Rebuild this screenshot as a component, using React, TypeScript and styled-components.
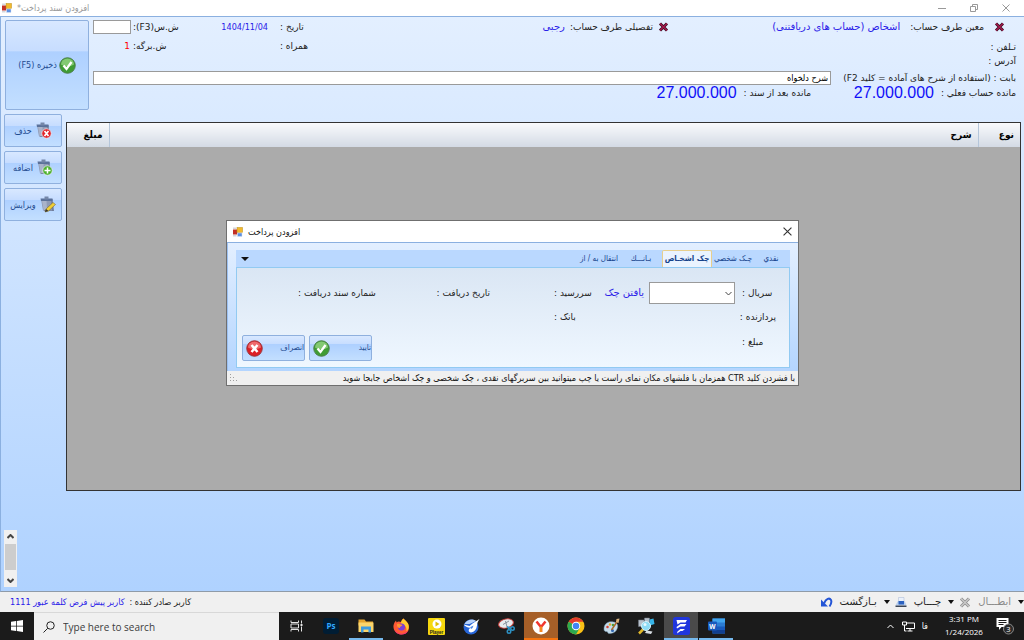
import React from "react";
import styled, { createGlobalStyle, css } from "styled-components";

const narrow = `"DejaVu Sans Condensed", "DejaVu Sans", sans-serif`;
const wide = `"DejaVu Sans", sans-serif`;

const GlobalStyle = createGlobalStyle`
  *, *::before, *::after { box-sizing: border-box; }
  html, body { margin: 0; padding: 0; }
  body {
    font-family: ${narrow};
    font-size: 9px;
    line-height: 14px;
    color: #222;
    background: #fff;
  }
  button, input, select { font: inherit; color: inherit; margin: 0; }
  button { cursor: pointer; }
  svg { display: block; flex: none; }
`;

const Window = styled.div`
  display: flex;
  flex-direction: column;
  min-height: 100vh;
  white-space: nowrap;
`;

const TitleBar = styled.header`
  display: flex;
  align-items: center;
  gap: 5px;
  height: 16px;
  padding: 0 14px 0 2px;
  color: #999;
  background: #fff;
`;

const TitleText = styled.h1`
  flex: 1;
  margin: 0;
  font-size: 9px;
  font-weight: normal;
  text-align: left;
`;

const WindowControls = styled.div`
  display: flex;
  gap: 24px;
`;

const IconButton = styled.button`
  display: flex;
  align-items: center;
  justify-content: center;
  padding: 0;
  border: 0;
  background: none;
`;

const Workspace = styled.main`
  position: relative;
  flex: 1;
  display: flex;
  flex-direction: column;
  border-top: 1px solid #8bb0e0;
  border-left: 1px solid #8bb0e0;
  border-bottom: 1px solid #8f9ba8;
  background: linear-gradient(#e3efff, #afd2ff);
`;

const FormHeader = styled.section`
  display: flex;
  gap: 4px;
  height: 97px;
  padding: 3px 8px 0 4px;
`;

const glossy = css`
  border: 1px solid #8fb0de;
  border-radius: 2px;
  color: #1f4b8f;
  background: linear-gradient(#d8e8ff 0%, #c7ddff 34%, #aed0ff 35%, #c3dfff 100%);
`;

const SaveButton = styled.button`
  ${glossy}
  display: flex;
  align-items: center;
  justify-content: center;
  gap: 2px;
  width: 84px;
  height: 90px;
  padding: 0;
`;

const AccountForm = styled.form`
  flex: 1;
  display: flex;
  flex-direction: column;
  direction: rtl;
  font-family: ${wide};
`;

const AccountGrid = styled.div`
  display: grid;
  grid-template-columns: minmax(0, 347fr) minmax(0, 361fr) 215px;
  height: 51px;
`;

const Party = styled.div<{ $inset: number; $gap: number }>`
  display: flex;
  align-items: center;
  gap: ${(p) => p.$gap}px;
  height: 14px;
  padding-right: ${(p) => p.$inset}px;
`;

const BlueLink = styled.a`
  font-family: ${wide};
  font-size: 10px;
  color: #2a20e8;
  text-decoration: none;
`;

const ContactLines = styled.div`
  padding-top: 6px;
`;

const MetaGrid = styled.div`
  display: grid;
  grid-template-columns: 28px 98px 49px 40px;
  grid-auto-rows: 14px;
  row-gap: 5px;
`;

const EndLabel = styled.label<{ $col?: number }>`
  grid-column: ${(p) => p.$col ?? "auto"};
  text-align: left;
`;

const DateValue = styled.span`
  padding-right: 12px;
  font-family: ${narrow};
  color: #2a20e8;
`;

const SheetNumber = styled.span`
  grid-column: 4;
  padding-right: 3px;
  color: #f00;
`;

const TextBox = styled.input`
  height: 14px;
  min-width: 0;
  padding: 0 2px;
  border: 1px solid #9a9a9a;
  border-radius: 0;
  font-family: ${narrow};
  color: #000;
  background: #fff;
`;

const SerialBox = styled(TextBox)`
  width: 38px;
  justify-self: end;
`;

const SubjectRow = styled.div`
  display: flex;
  align-items: center;
  gap: 6px;
  & > label { min-width: 179px; }
  & > input { flex: 1; }
`;

const BalanceRow = styled.div`
  display: flex;
  align-items: center;
  height: 15px;
`;

const Balance = styled.div`
  display: flex;
  align-items: center;
  gap: 7px;
  width: 205px;
`;

const Amount = styled.output`
  font-family: "Liberation Sans", sans-serif;
  font-size: 16px;
  color: #1010f8;
`;

const Body = styled.section`
  flex: 1;
  display: flex;
  gap: 4px;
  padding: 0 3px 0 3px;
`;

const SideTools = styled.nav`
  display: flex;
  flex-direction: column;
  gap: 4px;
  width: 58px;
`;

const SideButton = styled.button`
  ${glossy}
  display: flex;
  align-items: center;
  justify-content: center;
  gap: 4px;
  height: 33px;
  padding: 0;
  direction: rtl;
`;

const GridFrame = styled.div`
  flex: 1;
  margin-top: 8px;
  border: 1px solid #333;
  background: #ababab;
`;

const GridTable = styled.table`
  width: 100%;
  border-collapse: collapse;
  table-layout: fixed;
  direction: rtl;
`;

const HeadCell = styled.th<{ $width?: number }>`
  width: ${(p) => (p.$width ? `${p.$width}px` : "auto")};
  height: 24px;
  padding: 0 6px;
  border-left: 1px solid #b5c6da;
  font-size: 10px;
  text-align: right;
  color: #000;
  background: linear-gradient(#f9fafc, #d3dae4);
  &:last-child { border-left: 0; }
`;

const LowerStrip = styled.section`
  padding: 39px 3px 4px;
`;

const ScrollBar = styled.div`
  display: flex;
  flex-direction: column;
  justify-content: space-between;
  align-items: center;
  width: 13px;
  height: 57px;
  background: #f0f0f0;
`;

const ScrollButton = styled(IconButton)`
  width: 13px;
  height: 13px;
`;

const ScrollThumb = styled.div`
  width: 11px;
  height: 26px;
  margin-bottom: 4px;
  background: #cdcdcd;
`;

const Overlay = styled.div`
  position: absolute;
  inset: 0;
  display: grid;
  place-items: center;
  padding-bottom: 2px;
`;

const Dialog = styled.section`
  display: flex;
  flex-direction: column;
  width: 573px;
  border: 1px solid #6f6f6f;
  background: #fff;
`;

const DialogTitle = styled.header`
  display: flex;
  align-items: center;
  gap: 5px;
  height: 22px;
  padding: 0 6px;
  border-bottom: 1px solid #8bb0e0;
  color: #111;
`;

const DialogBody = styled.div`
  padding: 7px 8px 3px;
  border-left: 1px solid #9cc0f0;
  background: linear-gradient(#e3efff, #b4d5ff);
`;

const TabStrip = styled.div`
  display: flex;
  align-items: flex-end;
  height: 17px;
  padding-right: 2px;
  direction: rtl;
  background: #bad8ff;
`;

const Tab = styled.button<{ $active?: boolean; $width: number }>`
  width: ${(p) => p.$width}px;
  height: 17px;
  padding: 0;
  overflow: hidden;
  border: 1px solid ${(p) => (p.$active ? "#e8cf8c" : "transparent")};
  border-bottom: 0;
  border-radius: 2px 2px 0 0;
  font-size: 8px;
  font-weight: ${(p) => (p.$active ? "bold" : "normal")};
  line-height: 12px;
  color: #15428b;
  background: ${(p) => (p.$active ? "#eaf3ff" : "none")};
`;

const TabMenu = styled(IconButton)`
  width: 18px;
  height: 17px;
  margin-right: auto;
`;

const TabPanel = styled.form`
  display: grid;
  grid-template-columns: 34px 145px 43px 64px 53px 58px 81px 1fr;
  grid-template-rows: 22px 26px 24px 7px;
  align-items: center;
  height: 101px;
  padding: 14px 13px 0 5px;
  border: 1px solid #92caf2;
  direction: rtl;
  font-family: ${wide};
  background: linear-gradient(#dae6f4, #eff7ff);
`;

const SerialCell = styled.div`
  display: flex;
  align-items: center;
  gap: 5px;
  padding-right: 7px;
`;

const SelectBox = styled.span`
  display: grid;
  width: 86px;
  height: 22px;
  direction: ltr;
  & > * { grid-area: 1 / 1; }
  & > svg { align-self: center; justify-self: end; margin-right: 3px; pointer-events: none; }
`;

const SerialSelect = styled.select`
  appearance: none;
  border: 1px solid #9a9a9a;
  border-radius: 0;
  background: #fff;
`;

const DialogActions = styled.div`
  grid-column: 2 / -1;
  grid-row: 3 / 5;
  align-self: end;
  justify-self: end;
  display: flex;
  gap: 4px;
`;

const ActionButton = styled.button`
  ${glossy}
  display: flex;
  align-items: center;
  justify-content: space-between;
  width: 63px;
  height: 26px;
  padding: 0 0 0 3px;
  font-family: ${narrow};
  font-size: 8px;
`;

const Hint = styled.footer`
  display: flex;
  align-items: center;
  justify-content: space-between;
  height: 14px;
  padding: 0 3px;
  direction: rtl;
  color: #111;
  background: #f0f0f0;
`;

const StatusBar = styled.footer`
  display: flex;
  align-items: center;
  justify-content: space-between;
  height: 20px;
  direction: rtl;
  background: #f0f0f0;
`;

const StatusTools = styled.div`
  display: flex;
  align-items: center;
  gap: 5px;
`;

const StatusButton = styled.button<{ $muted?: boolean }>`
  display: flex;
  align-items: center;
  gap: 7px;
  padding: 0;
  border: 0;
  background: none;
  font-family: ${wide};
  font-size: 10px;
  color: ${(p) => (p.$muted ? "#8a8a8a" : "#222")};
`;

const Issuer = styled.p`
  display: flex;
  gap: 5px;
  margin: 0;
  padding-left: 10px;
`;

const IssuerName = styled.span`
  color: #2a20e8;
`;

const Taskbar = styled.footer`
  display: flex;
  align-items: stretch;
  height: 28px;
  color: #fff;
  background: #1b1b1b;
`;

const StartButton = styled(IconButton)`
  width: 34px;
`;

const SearchBox = styled.label`
  display: flex;
  align-items: center;
  gap: 8px;
  width: 245px;
  padding-left: 9px;
  border-top: 1px solid #d8d8d8;
  background: #f0f0f0;
`;

const SearchInput = styled.input`
  flex: 1;
  min-width: 0;
  padding: 0;
  border: 0;
  outline: 0;
  font-family: "Open Sans", sans-serif;
  font-size: 10px;
  background: none;
  &::placeholder { color: #3c3c3c; opacity: 1; }
`;

const TaskList = styled.nav`
  flex: 1;
  display: flex;
  gap: 1px;
`;

const TaskButton = styled.button<{ $tone?: string; $line?: string }>`
  display: flex;
  align-items: center;
  justify-content: center;
  width: 34px;
  padding: 2px 0 0;
  border: 0;
  border-bottom: 2px solid ${(p) => p.$line ?? "transparent"};
  background: ${(p) => p.$tone ?? "none"};
`;

const Tray = styled.div`
  display: flex;
  align-items: center;
  gap: 7px;
  padding-right: 10px;
`;

const Clock = styled.time`
  width: 42px;
  margin: 0 4px 0 8px;
  padding-bottom: 2px;
  font-family: "Open Sans", sans-serif;
  font-size: 8px;
  line-height: 13px;
  text-align: center;
`;

const FormIcon = () => (
  <svg width="10" height="10" viewBox="0 0 20 20">
    <rect x="0" y="5" width="9" height="10" fill="#c22f25" />
    <rect x="8" y="1" width="11" height="10" fill="#f2b92c" stroke="#b98a14" />
    <rect x="9" y="12" width="9" height="7" fill="#5b8fe0" stroke="#d9e4f5" />
    <path d="M0 1h7v3H0ZM0 16h7v3H0Z" fill="#d3d6dc" />
  </svg>
);

const CloseGlyph = ({ size = 8, color = "#999" }) => (
  <svg width={size} height={size} viewBox="0 0 8 8" stroke={color} fill="none">
    <path d="M0.5 0.5 7.5 7.5M7.5 0.5 0.5 7.5" />
  </svg>
);

const RedCross = () => (
  <svg width="11" height="10" viewBox="0 0 22 20">
    <path d="M4 3 18 17M18 3 4 17" stroke="#3b1022" strokeWidth="6" />
    <path d="M4 3 18 17M18 3 4 17" stroke="#a8184e" strokeWidth="2.5" />
  </svg>
);

const CheckBall = ({ size = 17 }) => (
  <svg width={size} height={size} viewBox="0 0 34 34">
    <circle cx="17" cy="17" r="15.5" fill="#3f9c34" stroke="#4c7f4a" strokeWidth="2" />
    <path d="M4 15a13 12 0 0 1 26 0c-8 5-18 5-26 0Z" fill="#83c972" />
    <path d="m9 17 6 7L25 10" fill="none" stroke="#fff" strokeWidth="4.5" />
  </svg>
);

const CrossBall = ({ size = 17 }) => (
  <svg width={size} height={size} viewBox="0 0 34 34">
    <circle cx="17" cy="17" r="15.5" fill="#dc1f26" stroke="#9b3438" strokeWidth="2" />
    <path d="M4 15a13 12 0 0 1 26 0c-8 4-18 4-26 0Z" fill="#ef6a6d" />
    <path d="m11 10 12 14M23 10 11 24" fill="none" stroke="#fff" strokeWidth="5" />
  </svg>
);

const Clipboard = ({ badge }: { badge: "remove" | "add" | "edit" }) => (
  <svg width="16" height="17" viewBox="0 0 32 34">
    <path d="M3 6h22l3 24H8Z" fill="#6f7d9c" />
    <path d="M2 6h20l2 23H6Z" fill="#8e9ab5" />
    <path d="M4 9h9l1 19H7Z" fill="#a9b3ca" />
    <path d="M1 5h24v5H2Z" fill="#5b7199" />
    <path d="M9 1h8v6H9Z" fill="#7587a8" />
    {badge === "edit" ? (
      <g>
        <path d="m12 26 14-13 5 4-14 13-7 2Z" fill="#f0cf36" stroke="#6b5a25" />
        <path d="m12 26 5 4-7 2Z" fill="#333" />
      </g>
    ) : (
      <g>
        <circle cx="21" cy="23" r="9.5" fill={badge === "add" ? "#4fb22f" : "#e2252b"} stroke="#e9eef6" strokeWidth="1.5" />
        {badge === "add" ? (
          <path d="M21 17v12M15 23h12" stroke="#fff" strokeWidth="3" />
        ) : (
          <path d="m17 18 8 10M25 18l-8 10" stroke="#fff" strokeWidth="3.5" />
        )}
      </g>
    )}
  </svg>
);

const Caret = ({ width = 6 }) => (
  <svg width={width} height="4" viewBox="0 0 6 4" preserveAspectRatio="none">
    <path d="M0 0h6L3 4Z" fill="#111" />
  </svg>
);

const Chevron = ({ up = false, color = "#444", width = 7, weight = 1 }) => (
  <svg width={width} height="5" viewBox="0 0 7 5" fill="none" stroke={color} strokeWidth={weight}>
    <path d={up ? "M0.500 4 3.500 1l3 3" : "m0.500 1 3 3 3-3"} />
  </svg>
);

const GrayCross = () => (
  <svg width="12" height="11" viewBox="0 0 24 22">
    <path d="M4 3 20 19M20 3 4 19" stroke="#8c8c8c" strokeWidth="6" />
    <path d="M4 3 20 19M20 3 4 19" stroke="#c9c9c9" strokeWidth="3" />
  </svg>
);

const Printer = () => (
  <svg width="12" height="11" viewBox="0 0 24 22">
    <path d="M7 1h11v9H7Z" fill="#eaf1fb" stroke="#a4b7d4" />
    <path d="M5 9h15l3 8H1Z" fill="#b9cfee" />
    <path d="M7 8h11v7H7Z" fill="#2c62c0" />
    <path d="M1 17h22v3H1Z" fill="#3c4656" />
  </svg>
);

const Undo = () => (
  <svg width="13" height="11" viewBox="0 0 26 22">
    <path d="M2 5v14h14Z" fill="#2455d6" />
    <path d="M8 13C12 3 19 1 22 6c2 5 0 9-3 13" fill="none" stroke="#2455d6" strokeWidth="4" />
  </svg>
);

const Grip = () => (
  <svg width="8" height="8" viewBox="0 0 8 8" fill="#a0a0a0">
    <path d="M0 0h1v1H0zM0 3h1v1H0zM3 3h1v1H3zM0 6h1v1H0zM3 6h1v1H3zM6 6h1v1H6z" />
  </svg>
);

const WindowsLogo = () => (
  <svg width="12" height="12" viewBox="0 0 24 24" fill="#fff">
    <path d="M0 3.500 10 2v9.500H0ZM11.500 1.800 24 0v11.500H11.500ZM0 12.800h10V22L0 20.500ZM11.500 12.800H24V24l-12.500-1.800Z" />
  </svg>
);

const Magnifier = () => (
  <svg width="12" height="12" viewBox="0 0 24 24" fill="none" stroke="#222" strokeWidth="2">
    <circle cx="15" cy="9" r="7.500" />
    <path d="M9.500 14.500 1 23" />
  </svg>
);

const TaskView = () => (
  <svg width="13" height="12" viewBox="0 0 26 24" fill="none" stroke="#e4e4e4" strokeWidth="2">
    <path d="M2 1v4h15V1M2 23v-4h15v4M2 8h15v8H2ZM23 1v6M23 13v10" />
    <path d="M21 10h4" strokeWidth="4" />
  </svg>
);

const Photoshop = () => (
  <svg width="16" height="16" viewBox="0 0 32 32">
    <rect width="32" height="32" rx="6" fill="#001d34" />
    <text x="16" y="22" textAnchor="middle" fontFamily="Open Sans" fontWeight="bold" fontSize="16" fill="#31a8ff">Ps</text>
  </svg>
);

const Folder = () => (
  <svg width="16" height="14" viewBox="0 0 32 28">
    <path d="M1 1h12l3 4h14v8H1Z" fill="#e5a52e" />
    <path d="M1 7h30v19H1Z" fill="#fbd56b" />
    <path d="M6 15h20v12h-5v-6H11v6H6Z" fill="#3d9be0" />
  </svg>
);

const Firefox = () => (
  <svg width="17" height="17" viewBox="0 0 34 34">
    <path d="M21 1c3 4 6 5 9 10 6 12-2 22-13 22C6 33 0 24 1 15c1-4 2-7 5-10l1 4c3-3 6-2 9-1 1-3 2-5 5-7Z" fill="#ff5a36" />
    <path d="M21 1c3 4 6 5 9 10 3 7 1 12-3 16 1-8-2-13-11-16 0-4 2-8 5-10Z" fill="#ffcb2e" />
    <path d="M3 22c4 10 18 14 27 3-2 6-7 8-13 8C9 33 4 28 3 22Z" fill="#f5307c" />
    <circle cx="17" cy="18" r="7" fill="#7a3fd6" />
    <path d="M8 12c4-1 6 1 11 2-2 3-6 3-5 6-4 0-7-3-6-8Z" fill="#ff9530" />
  </svg>
);

const Player = () => (
  <svg width="17" height="17" viewBox="0 0 34 34">
    <rect width="34" height="34" rx="2" fill="#f6d80e" />
    <circle cx="18" cy="12" r="9" fill="#fff" />
    <path d="m15 7 8 5-8 5Z" fill="#e0bf00" />
    <text x="17" y="31" textAnchor="middle" fontFamily="Liberation Sans" fontWeight="bold" fontSize="9" fill="#222">Player</text>
  </svg>
);

const BlueBird = () => (
  <svg width="17" height="17" viewBox="0 0 34 34">
    <circle cx="16" cy="18" r="15" fill="#2866d8" />
    <path d="M3 12C7 3 20 0 26 6L13 12Z" fill="#b8d3fb" />
    <path d="m1 13 12 3 6-5 14-9c-3 5-5 8-5 13-1 8-5 13-12 14-5-1-6-5-3-8l5-2C10 20 5 18 1 13Z" fill="#fff" />
    <path d="m15 18 6-3-2 5-3 2Z" fill="#4a85e8" />
  </svg>
);

const Snipping = () => (
  <svg width="17" height="16" viewBox="0 0 34 32">
    <ellipse cx="16" cy="11" rx="15" ry="9" transform="rotate(-14 16 11)" fill="#e8ebef" stroke="#c9413d" strokeWidth="2" />
    <path d="m10 13 12-7M15 6l3 12" stroke="#88929e" strokeWidth="2" />
    <g fill="none" stroke="#2d91c4" strokeWidth="3">
      <circle cx="22" cy="27" r="3.500" />
      <circle cx="29" cy="21" r="3.500" />
      <path d="m22 23-3-6M26 20l-8-2" />
    </g>
  </svg>
);

const Yandex = () => (
  <svg width="18" height="18" viewBox="0 0 36 36">
    <circle cx="18" cy="18" r="17" fill="#fff" />
    <path d="m9 9 9 11 9-11M18 19v11" fill="none" stroke="#f0352d" strokeWidth="5" />
    <path d="M18 19v11" stroke="#f58a1e" strokeWidth="5" />
  </svg>
);

const Chrome = () => (
  <svg width="18" height="18" viewBox="0 0 36 36">
    <circle cx="18" cy="18" r="17" fill="#fbc116" />
    <path d="M18 18 3.300 9.500A17 17 0 0 1 32.700 9.500H18Z" fill="#e33b2e" />
    <path d="M3.300 9.500A17 17 0 0 0 18 35l7.400-13L18 18Z" fill="#2da94f" />
    <circle cx="18" cy="18" r="8.500" fill="#fff" />
    <circle cx="18" cy="18" r="6.500" fill="#4285f4" />
  </svg>
);

const Palette = () => (
  <svg width="17" height="17" viewBox="0 0 34 34">
    <path d="M2 22C2 10 12 6 21 8c8 1 10 8 7 14-3 7-9 9-16 9-3 0-2-4-5-4s-5-1-5-5Z" fill="#c5dcec" stroke="#7fa4bd" />
    <circle cx="9" cy="18" r="2.500" fill="#d54234" />
    <circle cx="14" cy="13" r="2.500" fill="#e5a82c" />
    <circle cx="20" cy="14" r="2.500" fill="#46a13c" />
    <circle cx="19" cy="25" r="3" fill="#2b67b8" />
    <path d="M17 24 29 6" stroke="#a9682c" strokeWidth="3" />
    <path d="m26 8 1-6 6-1-2 9Z" fill="#ddb681" />
  </svg>
);

const SearchTool = () => (
  <svg width="18" height="18" viewBox="0 0 36 36">
    <path d="M3 6h11v13H3ZM15 2h10v12H15Z" fill="#b7c0ca" stroke="#717b86" />
    <path d="m25 5 8-2 2 11-9 3Z" fill="#37b5e8" />
    <path d="m19 27 12 2-3 5-12-2Z" fill="#d7dde3" />
    <path d="m12 25-8 8" stroke="#e3ba2a" strokeWidth="5" />
    <circle cx="18" cy="18" r="9" fill="#8edcf5" stroke="#d5f2fb" strokeWidth="2" />
    <circle cx="16" cy="15" r="3" fill="#e9f9fe" />
  </svg>
);

const FinanceApp = () => (
  <svg width="17" height="18" viewBox="0 0 34 36">
    <rect width="34" height="36" rx="5" fill="#2036dd" />
    <path d="M7 6h21l-3 5H15l-6 4ZM7 20l8-6h12l-4 5h-8l-7 4ZM9 29l6-5h9l-5 4h-4l-7 5Z" fill="#fff" />
  </svg>
);

const Word = () => (
  <svg width="17" height="16" viewBox="0 0 34 32">
    <path d="M9 1h25v30H9Z" fill="#2b7cd3" />
    <path d="M9 1h25v8H9Z" fill="#41a5ee" />
    <path d="M9 17h25v7H9Z" fill="#185abd" />
    <path d="M9 24h25v7H9Z" fill="#103f91" />
    <rect y="7" width="18" height="18" rx="2" fill="#185abd" />
    <text x="9" y="21" textAnchor="middle" fontFamily="Open Sans" fontWeight="bold" fontSize="13" fill="#fff">W</text>
  </svg>
);

const Network = () => (
  <svg width="13" height="11" viewBox="0 0 26 22" fill="none" stroke="#fff" strokeWidth="2">
    <path d="M8 4h17v11H8M16 15v5M11 20h10M5 8v12h4" />
    <path d="M1 2h8v6H1Z" />
  </svg>
);

const Notifications = () => (
  <svg width="18" height="18" viewBox="0 0 36 36">
    <path d="M1 2h24v18H11l-5 6v-6H1Z" fill="#fff" />
    <path d="M5 7h16M5 11h16M5 15h10" stroke="#1b1b1b" strokeWidth="2" />
    <circle cx="25" cy="24" r="10" fill="#2b2b2b" stroke="#aaa" strokeWidth="1.500" />
    <text x="25" y="29" textAnchor="middle" fontFamily="Open Sans" fontSize="15" fill="#fff">3</text>
  </svg>
);

const tasks = [
  { name: "Task View", icon: <TaskView /> },
  { name: "Photoshop", icon: <Photoshop /> },
  { name: "File Explorer", icon: <Folder />, line: "#76b9ed" },
  { name: "Firefox", icon: <Firefox /> },
  { name: "Player", icon: <Player /> },
  { name: "Messenger", icon: <BlueBird /> },
  { name: "Snipping Tool", icon: <Snipping /> },
  { name: "Yandex", icon: <Yandex />, tone: "#a65f28", line: "#f4730f" },
  { name: "Chrome", icon: <Chrome /> },
  { name: "Paint", icon: <Palette /> },
  { name: "Search Tool", icon: <SearchTool /> },
  { name: "Accounting", icon: <FinanceApp />, tone: "#4a4a4a", line: "#76b9ed" },
  { name: "Word", icon: <Word />, line: "#76b9ed" },
];

const tabs = [
  { label: "نقدي", width: 34 },
  { label: "چـک شخصي", width: 42 },
  { label: "چک اشخـاص", width: 50, active: true },
  { label: "بـانـــك", width: 42 },
  { label: "انتقال به / از", width: 42 },
];

const sideActions = [
  { label: "حذف", badge: "remove" as const },
  { label: "اضافه", badge: "add" as const },
  { label: "ویرایش", badge: "edit" as const },
];

function AccountHeader() {
  return (
    <FormHeader>
      <SaveButton type="button" dir="rtl">
        <CheckBall />
        ذخیره (F5)
      </SaveButton>
      <AccountForm>
        <AccountGrid>
          <div>
            <Party $inset={11} $gap={10}>
              <IconButton type="button" aria-label="حذف معین"><RedCross /></IconButton>
              <span>معین طرف حساب:</span>
              <BlueLink href="#account">اشخاص (حساب های دریافتنی)</BlueLink>
            </Party>
            <ContactLines>
              <div>تـلفن :</div>
              <div>آدرس :</div>
            </ContactLines>
          </div>
          <Party $inset={0} $gap={5}>
            <IconButton type="button" aria-label="حذف تفصیلی"><RedCross /></IconButton>
            <span>تفصیلی طرف حساب:</span>
            <BlueLink href="#detail">رجبی</BlueLink>
          </Party>
          <MetaGrid>
            <EndLabel as="span">تاریخ :</EndLabel>
            <DateValue>1404/11/04</DateValue>
            <EndLabel htmlFor="serial-no">ش.س(F3):</EndLabel>
            <SerialBox id="serial-no" />
            <EndLabel as="span" $col={1}>همراه :</EndLabel>
            <EndLabel as="span" $col={3}>ش.برگه:</EndLabel>
            <SheetNumber>1</SheetNumber>
          </MetaGrid>
        </AccountGrid>
        <SubjectRow>
          <label htmlFor="subject">بابت : (استفاده از شرح های آماده = کلید F2)</label>
          <TextBox id="subject" defaultValue="شرح دلخواه" />
        </SubjectRow>
        <BalanceRow>
          <Balance><span>مانده حساب فعلي :</span><Amount>27.000.000</Amount></Balance>
          <Balance><span>مانده بعد از سند :</span><Amount>27.000.000</Amount></Balance>
        </BalanceRow>
      </AccountForm>
    </FormHeader>
  );
}

function PaymentDialog() {
  return (
    <Overlay>
      <Dialog role="dialog" aria-label="افزودن پرداخت">
        <DialogTitle>
          <FormIcon />
          <TitleText as="h2">افزودن پرداخت</TitleText>
          <IconButton type="button" aria-label="بستن"><CloseGlyph size={9} color="#333" /></IconButton>
        </DialogTitle>
        <DialogBody>
          <TabStrip role="tablist">
            {tabs.map((t) => (
              <Tab key={t.label} type="button" role="tab" aria-selected={!!t.active} $active={t.active} $width={t.width}>
                {t.label}
              </Tab>
            ))}
            <TabMenu type="button" aria-label="فهرست سربرگها"><Caret width={8} /></TabMenu>
          </TabStrip>
          <TabPanel>
            <EndLabel htmlFor="cheque-serial">سریال :</EndLabel>
            <SerialCell>
              <SelectBox>
                <SerialSelect id="cheque-serial"><option></option></SerialSelect>
                <Chevron />
              </SelectBox>
              <BlueLink href="#find">یافتن چک</BlueLink>
            </SerialCell>
            <EndLabel as="span" $col={3}>سررسید :</EndLabel>
            <EndLabel as="span" $col={5}>تاریخ دریافت :</EndLabel>
            <EndLabel as="span" $col={7}>شماره سند دریافت :</EndLabel>
            <EndLabel as="span" $col={1}>پردازنده :</EndLabel>
            <EndLabel as="span" $col={3}>بانک :</EndLabel>
            <EndLabel as="span" $col={1}>مبلغ :</EndLabel>
            <DialogActions>
              <ActionButton type="button" dir="ltr"><CheckBall />تایید</ActionButton>
              <ActionButton type="button" dir="ltr"><CrossBall />انصراف</ActionButton>
            </DialogActions>
          </TabPanel>
        </DialogBody>
        <Hint>
          <span>با فشردن کلید CTR همزمان با فلشهای مکان نمای راست یا چپ میتوانید بین سربرگهای نقدی ، چک شخصی و چک اشخاص جابجا شوید</span>
          <Grip />
        </Hint>
      </Dialog>
    </Overlay>
  );
}

export default function App() {
  return (
    <>
      <GlobalStyle />
      <Window lang="fa">
        <TitleBar>
          <FormIcon />
          <TitleText dir="rtl">افزودن سند پرداخت*</TitleText>
          <WindowControls>
            <IconButton type="button" aria-label="Minimize">
              <svg width="8" height="8" stroke="#999"><path d="M0 4.500h8" /></svg>
            </IconButton>
            <IconButton type="button" aria-label="Restore">
              <svg width="8" height="8" fill="none" stroke="#999"><path d="M0.500 2.500h5v5h-5ZM2.500 2.500v-2h5v5h-2" /></svg>
            </IconButton>
            <IconButton type="button" aria-label="Close"><CloseGlyph /></IconButton>
          </WindowControls>
        </TitleBar>
        <Workspace>
          <AccountHeader />
          <Body>
            <SideTools>
              {sideActions.map((a) => (
                <SideButton key={a.label} type="button"><Clipboard badge={a.badge} />{a.label}</SideButton>
              ))}
            </SideTools>
            <GridFrame>
              <GridTable>
                <thead>
                  <tr>
                    <HeadCell $width={42}>نوع</HeadCell>
                    <HeadCell>شرح</HeadCell>
                    <HeadCell $width={42}>مبلغ</HeadCell>
                  </tr>
                </thead>
              </GridTable>
            </GridFrame>
          </Body>
          <LowerStrip>
            <ScrollBar>
              <ScrollButton type="button" aria-label="بالا"><Chevron up weight={2} /></ScrollButton>
              <ScrollThumb />
              <ScrollButton type="button" aria-label="پایین"><Chevron weight={2} /></ScrollButton>
            </ScrollBar>
          </LowerStrip>
          <PaymentDialog />
        </Workspace>
        <StatusBar>
          <StatusTools>
            <StatusButton type="button" $muted><Caret />ابطـــال<GrayCross /></StatusButton>
            <StatusButton type="button"><Caret />چـــاپ<Printer /></StatusButton>
            <StatusButton type="button"><Caret />بـازگشت<Undo /></StatusButton>
          </StatusTools>
          <Issuer>کاربر صادر کننده :<IssuerName>کاربر پیش فرض کلمه عبور 1111</IssuerName></Issuer>
        </StatusBar>
        <Taskbar>
          <StartButton type="button" aria-label="Start"><WindowsLogo /></StartButton>
          <SearchBox>
            <Magnifier />
            <SearchInput type="search" placeholder="Type here to search" aria-label="Search" />
          </SearchBox>
          <TaskList>
            {tasks.map((t) => (
              <TaskButton key={t.name} type="button" aria-label={t.name} $tone={t.tone} $line={t.line}>{t.icon}</TaskButton>
            ))}
          </TaskList>
          <Tray>
            <Chevron up color="#fff" width={9} />
            <Network />
            <span>فا</span>
            <Clock>3:31 PM<br />1/24/2026</Clock>
            <Notifications />
          </Tray>
        </Taskbar>
      </Window>
    </>
  );
}
